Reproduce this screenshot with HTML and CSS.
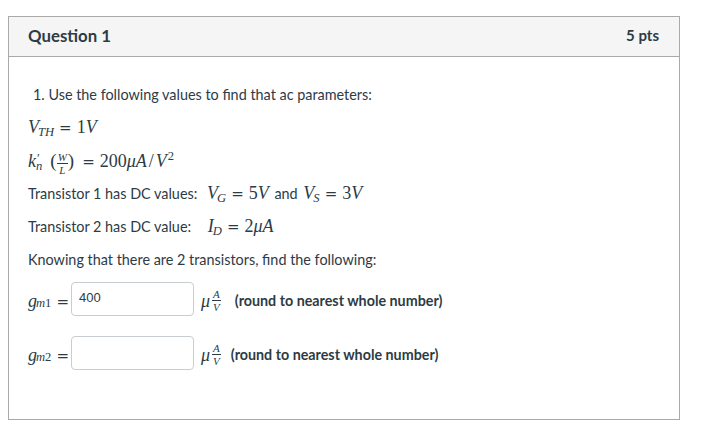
FILE: index.html
```html
<!DOCTYPE html>
<html>
<head>
<meta charset="utf-8">
<link rel="stylesheet" href="styles.css">
</head>
<body>
<div class="card">
  <div class="card-header">
    <span class="title">Question 1</span>
    <span class="pts">5 pts</span>
  </div>
  <div class="card-body">
    <p class="item">1. Use the following values to find that ac parameters:</p>
    <p><span class="m"><i>V</i><sub class="sb"><i>TH</i></sub><span class="eq">=</span>1<i>V</i></span></p>
    <p><span class="m"><i>k</i><span class="ss"><span class="ss-sup">′</span><span class="ss-sub"><i>n</i></span></span><span class="paren lp">(</span><span class="frac small"><span class="num"><i>W</i></span><span class="den"><i>L</i></span></span><span class="paren">)</span><span class="eq">=</span>200<i>μA</i><span class="slash">/</span><i>V</i><sup class="sp">2</sup></span></p>
    <p>Transistor 1 has DC values: <span class="m gap-l"><i>V</i><sub class="sb"><i>G</i></sub><span class="eq">=</span>5<i>V</i></span> <span class="gap-and">and</span> <span class="m"><i>V</i><sub class="sb"><i>S</i></sub><span class="eq">=</span>3<i>V</i></span></p>
    <p>Transistor 2 has DC value: <span class="m gap-l2"><i>I</i><sub class="sb"><i>D</i></sub><span class="eq">=</span>2<i>μA</i></span></p>
    <p>Knowing that there are 2 transistors, find the following:</p>
    <div class="answer-row">
      <span class="m lbl"><i>g</i><sub class="sb"><i>m</i>1</sub><span class="eq">=</span></span>
      <input class="answer" type="text" value="400">
      <span class="m unit"><i>μ</i><span class="frac small"><span class="num"><i>A</i></span><span class="den"><i>V</i></span></span></span>
      <span class="note first">(round to nearest whole number)</span>
    </div>
    <div class="answer-row">
      <span class="m lbl"><i>g</i><sub class="sb"><i>m</i>2</sub><span class="eq">=</span></span>
      <input class="answer" type="text" value="">
      <span class="m unit"><i>μ</i><span class="frac small"><span class="num"><i>A</i></span><span class="den"><i>V</i></span></span></span>
      <span class="note">(round to nearest whole number)</span>
    </div>
  </div>
</div>
</body>
</html>
```
FILE: styles.css
```css
html, body {
  margin: 0;
  padding: 0;
  background: #ffffff;
}
body {
  padding: 16px 31px 0 8px;
  font-family: Lato, "Liberation Sans", sans-serif;
  color: #2d3b45;
  font-size: 14.4px;
}
.card {
  width: 672px;
  box-sizing: border-box;
  border: 1px solid #a9a9a9;
  height: 404px;
}
.card-header {
  background: #f5f5f5;
  border-bottom: 1px solid #a9a9a9;
  height: 40px;
  box-sizing: border-box;
  display: flex;
  align-items: center;
  justify-content: space-between;
  padding: 0 20px 3px 19px;
}
.title {
  font-weight: bold;
  font-size: 16.8px;
  color: #2d3b45;
}
.pts {
  font-weight: bold;
  font-size: 15px;
  color: #2d3b45;
}
.card-body {
  padding: 15px 19px 0 19px;
}
.card-body p {
  margin: 12px 0;
  line-height: 21px;
  height: 21px;
}
.item {
  padding-left: 5px;
}
.m {
  font-family: "Liberation Serif", "DejaVu Serif", serif;
  font-size: 18px;
  white-space: nowrap;
}
.m i {
  font-style: italic;
}
.sb {
  font-size: 12.6px;
  vertical-align: -3px;
  line-height: 0;
  margin-left: -1px;
}
.sp {
  font-size: 12.6px;
  vertical-align: 7px;
  line-height: 0;
  margin-left: 1px;
}
.eq {
  font-family: "DejaVu Serif", serif;
  font-size: 15px;
  margin: 0 5px;
}
.slash {
  margin: 0 2px;
}
.ss {
  display: inline-flex;
  flex-direction: column;
  vertical-align: 5px;
  line-height: 8px;
  font-size: 12.6px;
}
.ss-sup {
  margin-left: 1px;
}
.paren {
  margin: 0;
  font-size: 19px;
}
.paren.lp {
  margin-left: 8px;
}
.frac {
  display: inline-flex;
  flex-direction: column;
  align-items: center;
  vertical-align: 6px;
  line-height: 9px;
}
.frac.small {
  font-size: 11px;
}
.frac .num {
  border-bottom: 1px solid #2d3b45;
  padding: 0 1px 1px;
}
.frac .den {
  padding: 2px 1px 0;
}
.paren + .eq {
  margin-left: 8px;
}
.gap-l {
  margin-left: 6px;
}
.gap-l2 {
  margin-left: 13px;
}
.gap-and {
  margin: 0 2px;
}
.answer-row {
  display: flex;
  align-items: center;
  height: 34px;
  margin: 0 0 20px 0;
}
.lbl {
  display: inline-flex;
  align-items: baseline;
  margin-top: 4px;
}
.lbl .eq {
  margin: 0 2px 0 5px;
}
.answer {
  width: 123px;
  height: 34px;
  box-sizing: border-box;
  border: 1px solid #c7cdd1;
  border-radius: 4px;
  padding: 0 7px 4px;
  font-family: "Liberation Sans", Arial, sans-serif;
  font-size: 13px;
  color: #2d3b45;
  margin: 0;
  background: #fff;
}
.unit {
  margin-left: 7px;
  display: inline-flex;
  align-items: center;
  margin-top: 4px;
}
.unit .frac {
  margin-left: 2px;
}
.note {
  font-weight: bold;
  font-size: 14.3px;
  margin-left: 10px;
  margin-top: 2px;
}
.note.first {
  margin-left: 14px;
}
```
